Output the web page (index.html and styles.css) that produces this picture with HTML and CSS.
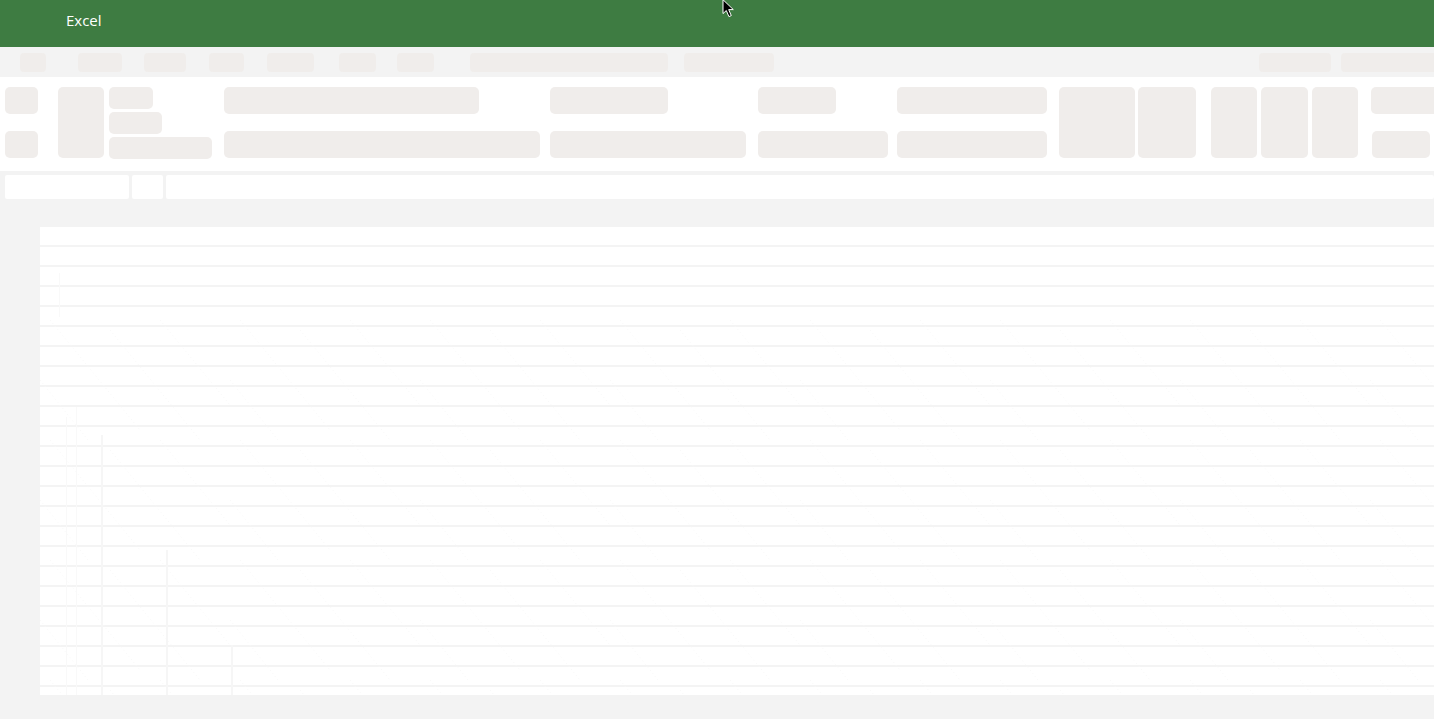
FILE: index.html
```html
<!DOCTYPE html>
<html lang="en">
<head>
<meta charset="utf-8">
<title>Excel</title>
<link rel="stylesheet" href="styles.css">
</head>
<body>
<div class="app">
  <header class="titlebar"><span class="appname">Excel</span></header>

  <nav class="tabs">
    <span class="pill tab t0"></span>
    <span class="pill tab t1"></span>
    <span class="pill tab t2"></span>
    <span class="pill tab t3"></span>
    <span class="pill tab t4"></span>
    <span class="pill tab t5"></span>
    <span class="pill tab t6"></span>
    <span class="pill tab t7"></span>
    <span class="pill tab t8"></span>
    <span class="tabs-end">
      <span class="pill tab t10"></span>
      <span class="pill tab t11"></span>
    </span>
  </nav>

  <section class="ribbon">
    <div class="group g-clip">
      <span class="pill big w33"></span>
      <span class="pill big w33"></span>
    </div>
    <span class="pill tall paste"></span>
    <div class="stack">
      <span class="pill small s1"></span>
      <span class="pill small s2"></span>
      <span class="pill small s3"></span>
    </div>
    <div class="group g-font">
      <span class="pill big w255"></span>
      <span class="pill big w316"></span>
    </div>
    <div class="group g-align">
      <span class="pill big w118"></span>
      <span class="pill big w196"></span>
    </div>
    <div class="group g-number">
      <span class="pill big w78"></span>
      <span class="pill big w130"></span>
    </div>
    <div class="group g-styles">
      <span class="pill big w150"></span>
      <span class="pill big w150"></span>
    </div>
    <span class="pill tall c1"></span>
    <span class="pill tall c2"></span>
    <span class="pill tall c3"></span>
    <span class="pill tall c4"></span>
    <span class="pill tall c5"></span>
    <div class="group g-last">
      <span class="pill big w63"></span>
      <span class="pill big w58"></span>
    </div>
  </section>

  <section class="formula">
    <span class="fcell name"></span>
    <span class="fcell fx"></span>
    <span class="fcell input"></span>
  </section>

  <main class="sheet">
    <div class="gutter"></div>
    <div class="grid">
      <div class="row"></div><div class="row"></div><div class="row"></div><div class="row"></div>
      <div class="row"></div><div class="row"></div><div class="row"></div><div class="row"></div>
      <div class="row"></div><div class="row"></div><div class="row"></div><div class="row"></div>
      <div class="row"></div><div class="row"></div><div class="row"></div><div class="row"></div>
      <div class="row"></div><div class="row"></div><div class="row"></div><div class="row"></div>
      <div class="row"></div><div class="row"></div><div class="row"></div>
      <div class="row last"></div>
      <svg class="streaks" width="1394" height="375" aria-hidden="true">
        <defs>
          <pattern id="streak" width="190" height="120" patternUnits="userSpaceOnUse">
            <g fill="none" stroke="#f7f7f7" stroke-width="1" stroke-dasharray="1 3">
              <path d="M10 0L100 110"/>
              <path d="M70 10L160 120"/>
              <path d="M120 0L190 85"/>
              <path d="M0 60L48 120"/>
            </g>
          </pattern>
        </defs>
        <rect width="1394" height="375" fill="url(#streak)"/>
      </svg>
      <span class="vline v0"></span>
      <span class="vline v1"></span>
      <span class="vline v2"></span>
      <span class="vline v3"></span>
      <span class="vline v4"></span>
      <span class="vline v5"></span>
    </div>
  </main>

  <svg class="cursor" width="14" height="20" viewBox="0 0 14 20" aria-hidden="true">
    <path d="M1 0.7V14.6L4.3 11.5L6.9 17.6L9.3 16.6L6.7 10.6H11.3Z" fill="#000" stroke="#fff" stroke-width="1"/>
  </svg>
</div>
</body>
</html>
```

FILE: styles.css
```css
* { box-sizing: border-box; }
html, body { margin: 0; height: 100%; }
body { background: #f3f3f3; overflow: hidden; }

.app {
  position: relative;
  width: 1434px;
  height: 719px;
  overflow: hidden;
  background: #f3f3f3;
  font-family: "Open Sans", "Noto Sans", "Liberation Sans", sans-serif;
}

.titlebar {
  height: 47px;
  background: #3e7c42;
  padding: 11px 0 0 66px;
}
.appname {
  display: block;
  color: #fff;
  font-size: 15px;
  font-weight: 500;
  line-height: 19px;
}

.pill {
  display: block;
  flex: none;
  background: #f0edeb;
  border-radius: 5px;
}

/* tab strip */
.tabs {
  display: flex;
  height: 30px;
  padding-top: 6px;
}
.tab { height: 19px; border-radius: 4px; }
.t0 { width: 26px; margin-left: 20px; }
.t1 { width: 44px; margin-left: 32px; }
.t2 { width: 42px; margin-left: 22px; }
.t3 { width: 35px; margin-left: 23px; }
.t4 { width: 47px; margin-left: 23px; }
.t5 { width: 37px; margin-left: 25px; }
.t6 { width: 37px; margin-left: 21px; }
.t7 { width: 198px; margin-left: 36px; }
.t8 { width: 90px; margin-left: 16px; }
.tabs-end { display: flex; gap: 10px; margin-left: auto; }
.t10 { width: 72px; }
.t11 { width: 93px; border-radius: 4px 0 0 4px; }

/* ribbon */
.ribbon {
  display: flex;
  align-items: flex-start;
  height: 94px;
  padding: 10px 0 0 5px;
  background: #fff;
}
.group {
  display: flex;
  flex-direction: column;
  align-items: flex-start;
  gap: 17px;
  flex: none;
}
.big { height: 27px; }
.tall { height: 71px; }
.stack {
  display: flex;
  flex-direction: column;
  gap: 3px;
  margin-left: 5px;
  flex: none;
}
.small { height: 22px; }
.s1 { width: 44px; }
.s2 { width: 53px; }
.s3 { width: 103px; }
.paste { width: 46px; margin-left: 20px; }

.g-clip { width: 33px; }
.g-font { width: 316px; margin-left: 12px; }
.g-align { width: 196px; margin-left: 10px; }
.g-number { width: 130px; margin-left: 12px; }
.g-styles { width: 150px; margin-left: 9px; }
.g-last { margin-left: 13px; }

.w33 { width: 33px; }
.w255 { width: 255px; }
.w316 { width: 316px; }
.w118 { width: 118px; }
.w196 { width: 196px; }
.w78 { width: 78px; }
.w130 { width: 130px; }
.w150 { width: 150px; }
.w63 { width: 63px; border-radius: 5px 0 0 5px; }
.w58 { width: 58px; margin-left: 1px; }

.c1 { width: 76px; margin-left: 12px; }
.c2 { width: 58px; margin-left: 3px; }
.c3 { width: 46px; margin-left: 15px; }
.c4 { width: 47px; margin-left: 4px; }
.c5 { width: 46px; margin-left: 4px; }

/* formula bar */
.formula {
  display: flex;
  height: 24px;
  margin-top: 4px;
  padding-left: 5px;
  gap: 3px;
}
.fcell { display: block; background: #fff; border-radius: 2px; flex: none; }
.name { width: 124px; }
.fx { width: 31px; }
.input { flex: 1; }

/* sheet */
.sheet {
  display: flex;
  padding-top: 28px;
}
.gutter { width: 40px; flex: none; }
.grid {
  position: relative;
  flex: 1;
  height: 468px;
  background: #fff;
}
.row {
  height: 20px;
  border-bottom: 2px solid #f4f4f4;
}
.row.last { height: 8px; border-bottom: 0; }

.streaks {
  position: absolute;
  left: 0;
  bottom: 0;
}

.vline {
  position: absolute;
  width: 1px;
  bottom: 0;
  background: #f9f9f9;
}
.v0 { left: 19px; top: 46px; height: 44px; bottom: auto; }
.v1 { left: 26px; top: 190px; }
.v2 { left: 36px; top: 180px; }
.v3 { left: 61px; top: 208px; width: 2px; background: #f6f6f6; }
.v4 { left: 126px; top: 323px; width: 2px; background: #f6f6f6; }
.v5 { left: 191px; top: 418px; width: 2px; background: #f6f6f6; }

.cursor {
  position: absolute;
  left: 722px;
  top: -1px;
}
```
